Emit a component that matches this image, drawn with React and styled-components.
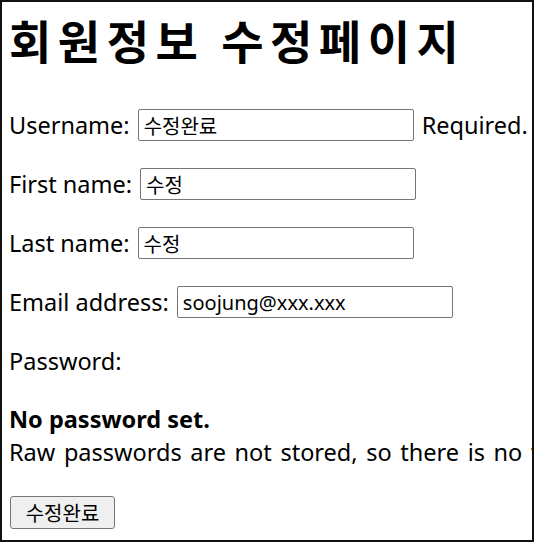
import React from "react";
import styled, { createGlobalStyle } from "styled-components";

const Global = createGlobalStyle`
  html, body { margin: 0; padding: 0; background: #fff; }
  body { font-family: "Noto Sans", "Noto Sans CJK KR", sans-serif; }
`;

const Frame = styled.div`
  box-sizing: border-box;
  width: 534px;
  height: 542px;
  border: 2px solid #111;
  overflow: hidden;
  padding: 0 0 0 7px;
  color: #000;
  font-size: 23.5px;
  white-space: nowrap;
`;

const Title = styled.h1`
  margin: 0;
  height: 103px;
  padding-top: 7px;
  box-sizing: border-box;
  font-family: "Noto Sans CJK KR", sans-serif;
  font-size: 46px;
  font-weight: 700;
  line-height: 60px;
  letter-spacing: 6.5px;
`;

const Form = styled.form`
  display: flex;
  flex-direction: column;
  gap: 19px;
`;

const Row = styled.div`
  display: flex;
  align-items: center;
  height: 40px;
  gap: 8px;
`;

const Label = styled.label``;

const Input = styled.input`
  box-sizing: border-box;
  width: 276px;
  height: 32px;
  border: 1px solid #767676;
  border-radius: 2px;
  padding: 0 5px;
  font-family: "Noto Sans", "Noto Sans CJK KR", sans-serif;
  font-size: 20px;
  color: #000;
  outline: none;
`;

const Help = styled.span``;

const Note = styled.div`
  display: flex;
  flex-direction: column;
  line-height: 33px;
  margin-top: 3px;
`;

const Strong = styled.strong`
  font-weight: 700;
`;

const Description = styled.span`
  word-spacing: 2.5px;
`;

const Button = styled.button`
  box-sizing: border-box;
  align-self: flex-start;
  margin-top: 8px;
  margin-left: 1px;
  width: 105px;
  height: 33px;
  background: #efefef;
  border: 1px solid #767676;
  border-radius: 3px;
  font-family: "Noto Sans CJK KR", sans-serif;
  font-size: 20px;
  color: #000;
  padding: 0;
`;

export default function App() {
  return (
    <>
      <Global />
      <Frame>
        <Title>회원정보 수정페이지</Title>
        <Form onSubmit={(e) => e.preventDefault()}>
          <Row>
            <Label>Username:</Label>
            <Input defaultValue="수정완료" />
            <Help>Required.</Help>
          </Row>
          <Row>
            <Label>First name:</Label>
            <Input defaultValue="수정" />
          </Row>
          <Row>
            <Label>Last name:</Label>
            <Input defaultValue="수정" />
          </Row>
          <Row>
            <Label>Email address:</Label>
            <Input defaultValue="soojung@xxx.xxx" />
          </Row>
          <Row>
            <Label>Password:</Label>
          </Row>
          <Note>
            <Strong>No password set.</Strong>
            <Description>Raw passwords are not stored, so there is no way to see this user's password.</Description>
          </Note>
          <Button type="submit">수정완료</Button>
        </Form>
      </Frame>
    </>
  );
}
